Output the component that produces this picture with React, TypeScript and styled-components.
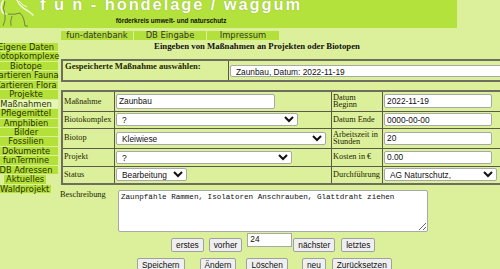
import React from 'react';
import styled, { createGlobalStyle } from 'styled-components';

const GlobalStyle = createGlobalStyle`
  html, body {
    margin: 0;
    padding: 0;
    background: #dcf09c;
    overflow: hidden;
  }
  body {
    font-family: "DejaVu Sans", Verdana, sans-serif;
    color: #222;
  }
`;

const Page = styled.div`
  width: 500px;
  height: 269px;
  overflow: hidden;
`;

const Banner = styled.header`
  display: flex;
  width: 457px;
  height: 28px;
  background: #b3e23c;
  overflow: hidden;
`;

const TitleBlock = styled.div`
  display: flex;
  flex-direction: column;
  align-items: center;
  margin-left: 4px;
`;

const Title = styled.div`
  margin-top: -4px;
  font-family: "Liberation Sans", Arial, sans-serif;
  font-weight: bold;
  font-size: 16.5px;
  line-height: 16.5px;
  letter-spacing: 1.9px;
  color: #fff;
  white-space: pre;
  text-shadow: 0 0 1px #7c9a2a;
`;

const Subtitle = styled.div`
  margin-top: 4px;
  font-family: "Liberation Sans", Arial, sans-serif;
  font-weight: bold;
  font-size: 6.4px;
  line-height: 7px;
  color: #111;
  white-space: nowrap;
`;

const NavRow = styled.nav`
  display: flex;
  gap: 1px;
  margin-top: 3px;
  padding-left: 61px;
`;

const Tab = styled.div`
  width: 72px;
  height: 9px;
  background: #b3e03a;
  font-size: 8.4px;
  line-height: 9px;
  text-align: center;
  color: #333;
  white-space: nowrap;
`;

const Content = styled.div`
  display: grid;
  grid-template-columns: 58px 1fr;
  column-gap: 3px;
  margin-top: 3px;
`;

const Sidebar = styled.aside`
  display: flex;
  flex-direction: column;
  gap: 1px;
`;

const SideItem = styled.div<{ $active?: boolean; $fit?: boolean; $shift?: number }>`
  display: flex;
  justify-content: center;
  box-sizing: border-box;
  height: 8.45px;
  padding-right: 6px;
  line-height: 8.45px;
  font-size: 8.3px;
  white-space: nowrap;
  color: #2a3300;
  background: ${(p) => (p.$active ? '#e6f6b6' : '#b4e03a')};
  ${(p) => (p.$fit ? `align-self: flex-start; padding: 0 2px; margin-left: ${p.$shift ?? 0}px;` : '')}
`;

const Main = styled.main`
  display: flex;
  flex-direction: column;
  min-width: 0;
`;

const Heading = styled.h1`
  width: 392px;
  margin: -2px 0 8px;
  font-family: "Liberation Serif", "Times New Roman", serif;
  font-size: 8.75px;
  line-height: 10px;
  font-weight: bold;
  text-align: center;
  color: #111;
`;

const Table = styled.table<{ $w: number; $mt?: number }>`
  width: ${(p) => p.$w}px;
  margin-top: ${(p) => p.$mt ?? 0}px;
  table-layout: fixed;
  border-collapse: collapse;
  border: 2px solid #6e6e5e;
`;

const Row = styled.tr<{ $h: number }>`
  height: ${(p) => p.$h}px;
`;

const Label = styled.td<{ $w?: number; $top?: boolean; $bold?: boolean }>`
  ${(p) => (p.$w ? `width: ${p.$w}px;` : '')}
  padding: ${(p) => (p.$top ? '2px 2px' : '0 1px')};
  border: 1px solid #5a5a48;
  vertical-align: ${(p) => (p.$top ? 'top' : 'middle')};
  font-family: "Liberation Serif", "Times New Roman", serif;
  font-size: ${(p) => (p.$bold ? '8.6px' : '8.3px')};
  font-weight: ${(p) => (p.$bold ? 'bold' : 'normal')};
  line-height: 7.5px;
  color: #1e2600;
  overflow: hidden;
`;

const Field = styled.td<{ $w?: number }>`
  ${(p) => (p.$w ? `width: ${p.$w}px;` : '')}
  padding: 0 1px;
  border: 1px solid #5a5a48;
  vertical-align: middle;
  white-space: nowrap;
`;

const TextInput = styled.input<{ $w: number; $h?: number }>`
  box-sizing: border-box;
  width: ${(p) => p.$w}px;
  height: ${(p) => p.$h ?? 14}px;
  padding: 0 2px;
  border: 1px solid #a8a8a8;
  border-radius: 2px;
  background: #fff;
  font-family: "Liberation Sans", Arial, sans-serif;
  font-size: 8.33px;
  color: #111;
  outline: none;
  display: block;
`;

const Select = styled.select<{ $w: number; $h?: number }>`
  box-sizing: border-box;
  width: ${(p) => p.$w}px;
  height: ${(p) => p.$h ?? 13}px;
  padding: 0 1px;
  border: 1px solid #a8a8a8;
  border-radius: 2px;
  background: #fff;
  font-family: "Liberation Sans", Arial, sans-serif;
  font-size: 8.33px;
  color: #111;
  display: block;
`;

const DescRow = styled.div`
  display: flex;
  margin-top: 5px;
  margin-left: -1px;
`;

const DescLabel = styled.div`
  width: 58px;
  font-family: "Liberation Serif", "Times New Roman", serif;
  font-size: 8.3px;
  line-height: 9px;
  color: #1e2600;
`;

const TextArea = styled.textarea`
  box-sizing: border-box;
  width: 310px;
  height: 42px;
  padding: 2px 2px;
  border: 1px solid #a8a8a8;
  border-radius: 2px;
  background: #fff;
  font-family: "Liberation Mono", "Courier New", monospace;
  font-size: 7.6px;
  line-height: 9px;
  color: #111;
  resize: both;
`;

const ButtonBar = styled.div<{ $pad: number; $top: number }>`
  display: flex;
  align-items: flex-start;
  margin-top: ${(p) => p.$top}px;
  padding-left: ${(p) => p.$pad}px;
`;

const Button = styled.button<{ $ml?: number; $mt?: number }>`
  box-sizing: border-box;
  height: 14px;
  margin-left: ${(p) => p.$ml ?? 0}px;
  margin-top: ${(p) => p.$mt ?? 0}px;
  padding: 0 4px;
  border: 1px solid #a0a0a0;
  border-radius: 2px;
  background: #efefef;
  font-family: "Liberation Sans", Arial, sans-serif;
  font-size: 8.33px;
  line-height: 12px;
  color: #111;
  white-space: nowrap;
`;

const PageInput = styled.input`
  box-sizing: border-box;
  width: 45px;
  height: 14px;
  margin-left: 5px;
  padding: 0 2px 2px;
  border: 1px solid #a8a8a8;
  background: #fff;
  font-family: "Liberation Sans", Arial, sans-serif;
  font-size: 8.33px;
  color: #111;
`;

function HeronLogo() {
  return (
    <svg width="36" height="28" viewBox="0 0 36 28" fill="none">
      <path d="M3 1 Q0 6 2 11 Q3 14 6 14" stroke="#f4f9e6" strokeWidth="1.6" strokeLinecap="round" />
      <path d="M5 1 Q2 9 5 15 Q6 20 3 26" stroke="#5f6b48" strokeWidth="0.8" />
      <path d="M17 0 Q20 7 28 11 Q31 13 33 15" stroke="#f4f9e6" strokeWidth="1.4" strokeLinecap="round" />
      <path d="M19 1 Q23 6 27 7" stroke="#f4f9e6" strokeWidth="1" />
      <path d="M8 14 Q15 15 20 13 Q23 16 24 20 L25 26" stroke="#5f6b48" strokeWidth="0.8" />
      <path d="M12 16 Q10 21 11 26" stroke="#5f6b48" strokeWidth="0.8" />
      <path d="M25 26 L28 26" stroke="#5f6b48" strokeWidth="0.8" />
    </svg>
  );
}

const menu = [
  'Eigene Daten',
  'Biotopkomplexe',
  'Biotope',
  'Kartieren Fauna',
  'Kartieren Flora',
  'Projekte',
  'Maßnahmen',
  'Pflegemittel',
  'Amphibien',
  'Bilder',
  'Fossilien',
  'Dokumente',
  'funTermine',
  'DB Adressen',
];

export default function App() {
  return (
    <Page>
      <GlobalStyle />
      <Banner>
        <HeronLogo />
        <TitleBlock>
          <Title>f u n - hondelage / waggum</Title>
          <Subtitle>förderkreis umwelt- und naturschutz</Subtitle>
        </TitleBlock>
      </Banner>

      <NavRow>
        <Tab>fun-datenbank</Tab>
        <Tab>DB Eingabe</Tab>
        <Tab>Impressum</Tab>
      </NavRow>

      <Content>
        <Sidebar>
          {menu.map((m) => (
            <SideItem key={m} $active={m === 'Maßnahmen'}>
              {m}
            </SideItem>
          ))}
          <SideItem $fit $shift={4}>Aktuelles</SideItem>
          <SideItem $fit $shift={-2}>Waldprojekt</SideItem>
        </Sidebar>

        <Main>
          <Heading>Eingeben von Maßnahmen an Projekten oder Biotopen</Heading>

          <Table $w={620}>
            <tbody>
              <Row $h={21}>
                <Label $w={161} $top $bold>
                  Gespeicherte Maßnahme auswählen:
                </Label>
                <Field>
                  <Select $w={400} $h={12} defaultValue="z">
                    <option value="z">Zaunbau, Datum: 2022-11-19</option>
                  </Select>
                </Field>
              </Row>
            </tbody>
          </Table>

          <Table $w={427} $mt={8}>
            <tbody>
              <Row $h={20}>
                <Label $w={49}>Maßnahme</Label>
                <Field $w={214}>
                  <TextInput $w={159} $h={15} defaultValue="Zaunbau" />
                </Field>
                <Label $w={48}>Datum Beginn</Label>
                <Field $w={116}>
                  <TextInput $w={108} defaultValue="2022-11-19" />
                </Field>
              </Row>
              <Row $h={17}>
                <Label>Biotokomplex</Label>
                <Field>
                  <Select $w={182}>
                    <option>?</option>
                  </Select>
                </Field>
                <Label>Datum Ende</Label>
                <Field>
                  <TextInput $w={108} $h={13} defaultValue="0000-00-00" />
                </Field>
              </Row>
              <Row $h={20}>
                <Label>Biotop</Label>
                <Field>
                  <Select $w={210}>
                    <option>Kleiwiese</option>
                  </Select>
                </Field>
                <Label>Arbeitszeit in Stunden</Label>
                <Field>
                  <TextInput $w={108} $h={13} defaultValue="20" />
                </Field>
              </Row>
              <Row $h={18}>
                <Label>Projekt</Label>
                <Field>
                  <Select $w={176}>
                    <option>?</option>
                  </Select>
                </Field>
                <Label>Kosten in €</Label>
                <Field>
                  <TextInput $w={108} $h={13} defaultValue="0.00" />
                </Field>
              </Row>
              <Row $h={18}>
                <Label>Status</Label>
                <Field>
                  <Select $w={71}>
                    <option>Bearbeitung</option>
                  </Select>
                </Field>
                <Label>Durchführung</Label>
                <Field>
                  <Select $w={113}>
                    <option>AG Naturschutz,</option>
                  </Select>
                </Field>
              </Row>
            </tbody>
          </Table>

          <DescRow>
            <DescLabel>Beschreibung</DescLabel>
            <TextArea defaultValue="Zaunpfähle Rammen, Isolatoren Anschrauben, Glattdraht ziehen" />
          </DescRow>

          <ButtonBar $pad={110} $top={1}>
            <Button $mt={5}>erstes</Button>
            <Button $mt={5} $ml={5}>vorher</Button>
            <PageInput defaultValue="24" />
            <Button $mt={5} $ml={1}>nächster</Button>
            <Button $mt={5} $ml={6}>letztes</Button>
          </ButtonBar>

          <ButtonBar $pad={76} $top={6}>
            <Button>Speichern</Button>
            <Button $ml={15}>Ändern</Button>
            <Button $ml={10}>Löschen</Button>
            <Button $ml={14}>neu</Button>
            <Button $ml={6}>Zurücksetzen</Button>
          </ButtonBar>
        </Main>
      </Content>
    </Page>
  );
}
